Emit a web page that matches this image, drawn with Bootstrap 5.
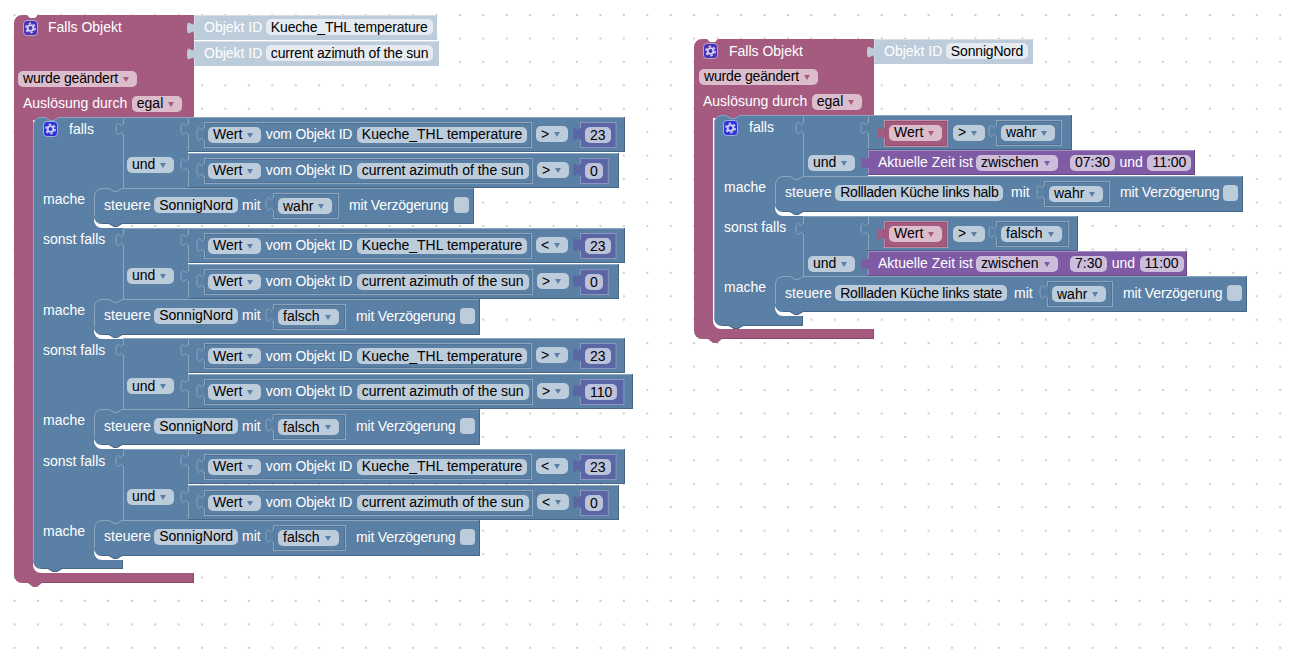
<!DOCTYPE html>
<html lang="de">
<head>
  <meta charset="UTF-8" />
  <meta name="viewport" content="width=device-width, initial-scale=1.0"/>
  <title>Blockly Skript</title>
  <link href="https://cdn.jsdelivr.net/npm/bootstrap@5.3.0/dist/css/bootstrap.min.css" rel="stylesheet">
  <style>
    body { background: #fff; overflow: hidden; }
    .workspace {
      width: 1300px;
      height: 661px;
      font-family: "Liberation Sans", Arial, sans-serif;
      font-size: 14px;
      line-height: 16px;
      /* Blockly grid dots */
      background-image: radial-gradient(circle at center, #c4c4c4 0, #d2d2d2 1px, transparent 1.5px);
      background-size: 23.45px 23.45px;
      background-position: 2.8px 3.3px;
    }
    .field-run { column-gap: 4.5px; white-space: nowrap; height: 16px; }
    .snug { column-gap: 3.5px; }
    .lbl { color: #fff; }
    .tight { letter-spacing: -.17px; }
    .tighter { letter-spacing: -.23px; }
    .chip {
      display: inline-flex;
      align-items: center;
      height: 16px;
      padding: 0 5px;
      border-radius: 5px;
      color: #000;
    }
    .chip.drop::after {
      content: "";
      margin: 0 3px 0 5px;
      border-left: 3px solid transparent;
      border-right: 3px solid transparent;
      border-top: 5px solid var(--arrow);
    }
    /* text sits one pixel higher in some rows of the picture */
    .lift .chip { padding-bottom: 2px; }
    .lift .chip.drop::after { margin-top: 2px; }
    .lift .lbl { margin-top: -2px; }
    .tone-blue { background: #bdccdb; --arrow: #5b80a5; }
    .tone-mag { background: #dbbdcc; --arrow: #a55b80; }
    .tone-pur { background: #ccbddb; --arrow: #805ba5; }
    .tone-num { background: #bdc2db; }
    .tone-shadow { background: #e5ebf1; }
    .tick { display: block; width: 15px; height: 16px; border-radius: 4px; background: #bdccdb; }
  </style>
</head>
<body>
  <main class="workspace position-relative" id="ws"></main>

  <script src="https://cdn.jsdelivr.net/npm/bootstrap@5.3.0/dist/js/bootstrap.bundle.min.js"></script>
  <script>
    const PAL = {
      mag: { f: "#a55b80", l: "#c08ca6", d: "#844966" },
      blue: { f: "#5b80a5", l: "#8ca6c0", d: "#496684" },
      pur: { f: "#805ba5", l: "#a68cc0", d: "#664984" },
      num: { f: "#5b67a5", l: "#8c95c0", d: "#495284" },
      shadow: { f: "#bdccdb", l: "#d7e0e9", d: "#bdccdb" }
    };
    let svg = "";
    let html = "";

    // --- shapes ---
    function box(x1, y1, x2, y2, p) {
      svg += `<rect x="${x1}" y="${y1}" width="${x2 - x1}" height="${y2 - y1}" fill="${p.f}"/>`;
      svg += `<path d="M${x1 + .5} ${y2}V${y1 + .5}H${x2}" fill="none" stroke="${p.l}"/>`;
      svg += `<path d="M${x2 - .5} ${y1}V${y2 - .5}H${x1}" fill="none" stroke="${p.d}"/>`;
    }
    function socket(x1, y1, x2, y2, p) {
      // value block sitting in its input: same colour, framed
      svg += `<rect x="${x1 + .5}" y="${y1 + .5}" width="${x2 - x1 - 1}" height="${y2 - y1 - 1}" fill="${p.f}" stroke="${p.l}"/>`;
      svg += `<path d="M${x1 + 1.5} ${y2 - 1.5}V${y1 + 1.5}H${x2 - 1.5}V${y2 - 1.5}H${x1 + 1.5}" fill="none" stroke="${p.d}" stroke-opacity=".5"/>`;
    }
    function tabPath(x, y, h) {
      const s = h / 12;
      return `M${x} ${y}c0 ${8 * s} -7 ${-6.4 * s} -7 ${6 * s}s7 ${-2 * s} 7 ${6 * s}`;
    }
    function tab(x, y, p, h = 12) {
      svg += `<path d="${tabPath(x, y, h)}" fill="${p.f}" stroke="${p.l}"/>`;
      svg += `<rect x="${x - .5}" y="${y + 1}" width="2" height="${h - 2}" fill="${p.f}"/>`;
    }
    function tabSolid(x, y, p, h = 12) {
      svg += `<path d="${tabPath(x, y, h)}z" fill="${p.f}"/>`;
      svg += `<rect x="${x - .5}" y="${y + 1}" width="2" height="${h - 2}" fill="${p.f}"/>`;
    }
    function statement(x, y1, x2, y2, p) {
      const n = x + 15;
      svg += `<path d="M${x} ${y1 + 8}A8 8 0 0 1 ${x + 8} ${y1}H${n}l5 3 3 0 5 -3H${x2}V${y2}H${n + 13}l-5 3 -3 0 -5 -3H${x + 8}A8 8 0 0 1 ${x} ${y2 - 8}Z" fill="${p.f}"/>`;
      svg += `<path d="M${x + .5} ${y2 - 8}V${y1 + 8}A7.5 7.5 0 0 1 ${x + 8} ${y1 + .5}H${n}l5 3 3 0 5 -3H${x2}" fill="none" stroke="${p.l}"/>`;
      svg += `<path d="M${x2 - .5} ${y1}V${y2 - .5}H${n + 13}l-5 3 -3 0 -5 -3H${x + 8}" fill="none" stroke="${p.d}"/>`;
    }
    function gap(x, x2, y2) {
      // white sliver under a nested statement
      svg += `<path d="M${x} ${y2 - 8}A8 8 0 0 0 ${x + 8} ${y2}H${x2}V${y2 + 4}H${x + 8}A8 8 0 0 1 ${x} ${y2 - 4}Z" fill="#fff"/>`;
    }
    function hat(x, y, xr, yTop, yBar) {
      // magenta C shape of the trigger block
      const p = PAL.mag, xi = x + 19;
      svg += `<path d="M${x} ${y + 8}A8 8 0 0 1 ${x + 8} ${y}H${x + 13}l3 3 5 0 3 -3H${xr}V${yTop + 3}H${xi}V${yBar - 8}A8 8 0 0 0 ${xi + 8} ${yBar}H${xr}V${yBar + 10}H${x + 28}l-5 4 -4 0 -5 -4H${x + 8}A8 8 0 0 1 ${x} ${yBar + 2}Z" fill="${p.f}"/>`;
      svg += `<path d="M${xr - .5} ${yBar}V${yBar + 9.5}H${x + 28}" fill="none" stroke="${p.d}"/>`;
    }
    function ifBlock(x, xr, y, yEnd) {
      const p = PAL.blue;
      svg += `<path d="M${x} ${y + 8}A8 8 0 0 1 ${x + 8} ${y}H${x + 12}l5 3 4 0 5 -3H${xr}V${yEnd}H${x + 29}l-5 3 -4 0 -5 -3H${x + 8}A8 8 0 0 1 ${x} ${yEnd - 8}Z" fill="${p.f}"/>`;
      svg += `<path d="M${x + .5} ${yEnd - 8}V${y + 8}A7.5 7.5 0 0 1 ${x + 8} ${y + .5}H${x + 12}l5 3 4 0 5 -3H${xr}" fill="none" stroke="${p.l}"/>`;
      svg += `<path d="M${xr - .5} ${yEnd - 10}V${yEnd - .5}H${x + 29}l-5 3 -4 0 -5 -3H${x + 8}" fill="none" stroke="${p.d}"/>`;
    }
    function gear(x, y, fill) {
      svg += `<g transform="translate(${x} ${y})"><rect x=".5" y=".5" width="14" height="15" rx="3.5" fill="${fill}" stroke="#d5d5f5" stroke-opacity=".65"/>`;
      svg += `<circle cx="7.5" cy="8" r="2.9" fill="none" stroke="#d2d2f4" stroke-width="1.9"/>`;
      svg += `<circle cx="7.5" cy="8" r="4.7" fill="none" stroke="#d2d2f4" stroke-width="1.5" stroke-dasharray="2.4 2.52"/></g>`;
    }

    // --- fields ---
    const lbl = (t, cls = "") => `<span class="lbl ${cls}">${t}</span>`;
    const chip = (t, tone, cls = "") => `<span class="chip tone-${tone} ${cls}">${t}</span>`;
    const drop = (t, tone, cls = "") => `<span class="chip drop tone-${tone} ${cls}">${t}</span>`;
    const tick = `<span class="tick"></span>`;
    function place(cls, x, y, items) {
      html += `<div class="field-run ${cls} position-absolute d-flex align-items-center" style="left:${x}px;top:${y}px">${items.join("")}</div>`;
    }
    const run = (x, y, ...items) => place("", x, y, items);
    const lifted = (on, x, y, ...items) => place(on ? "lift" : "", x, y, items);

    // --- blocks ---
    function compare(y, xr, name, op, num, up) {
      const x = 188, p = PAL.blue;
      box(x, y, xr, y + 35, p);
      tab(x, y + 6, p);
      const inner = name.startsWith("Kueche") ? 532 : 533;
      socket(204, y + 5, inner, y + 31, p);
      tab(204, y + 10, p, 14);
      const nx = 580, numW = num.length * 7.8 + 21;
      svg += `<rect x="${nx + .5}" y="${y + 5.5}" width="${numW - 1}" height="25" fill="${PAL.num.f}" stroke="${PAL.num.l}"/>`;
      tabSolid(nx, y + 10, PAL.num, 14);
      lifted(up, 208, y + 10, drop("Wert", "blue"), lbl("vom Objekt ID", "tight"), chip(name, "blue"));
      run(inner + 4, y + 9, drop(op, "blue"));
      run(nx + 5, y + 10, chip(num, "num"));
    }
    // socket and "mit" position per name, the chip width in front decides them
    const NAME_POS = {
      "SonnigNord": { box: 179, mit: 148, cls: "" },
      "Rollladen Küche links halb": { box: 269, mit: 236, cls: "tighter" },
      "Rollladen Küche links state": { box: 272, mit: 239, cls: "tighter" }
    };
    function steuere(x, y, xr, name, val, up) {
      const p = PAL.blue, y2 = y + 36, pos = NAME_POS[name];
      gap(x, x + 29, y2);
      statement(x, y, xr, y2, p);
      place("snug" + (up ? " lift" : ""), x + 10, y + 9, [lbl("steuere"), chip(name, "blue", pos.cls)]);
      lifted(up, x + pos.mit, y + 9, lbl("mit"));
      const bx = x + pos.box;
      socket(bx, y + 5, bx + (val === "wahr" ? 66 : 73), y + 31, p);
      tab(bx, y + 9, p, 14);
      lifted(up, bx + 5, y + 10, drop(val, "blue"));
      lifted(up && x > 500, bx + (val === "wahr" ? 76 : 83), y + 9, lbl("mit Verzögerung", "tight"));
      run(xr - 20, y + 9, tick);
    }

    function idBlock(x, y, xr, h, name) {
      box(x, y, xr, y + h, PAL.shadow);
      tabSolid(x, y + 7, PAL.shadow);
      place("snug", x + 10, y + 4, [lbl("Objekt ID"), chip(name, "shadow", "tight")]);
    }

    // left script
    hat(14, 15, 194, 117, 573);
    idBlock(194, 15, 437, 25, "Kueche_THL temperature");
    idBlock(194, 41, 439, 25, "current azimuth of the sun");
    gear(23, 20, "#4a2fb4");
    run(48, 19, lbl("Falls Objekt"));
    lifted(true, 18, 71, drop("wurde geändert", "mag", "tight"));
    lifted(true, 23, 96, lbl("Auslösung durch"), drop("egal", "mag"));
    ifBlock(33, 123, 117, 569);
    gear(43, 121, "#2d33dc");
    run(69, 121, lbl("falls"));

    const sections = [
      { top: 117, label: null, w: [625, 619], ops: ["&gt;", "&gt;"], nums: ["23", "0"], val: "wahr", xr: 474, ly: 3, up: [1, 1, 1, 0] },
      { top: 228, label: "sonst falls", w: [625, 619], ops: ["&lt;", "&gt;"], nums: ["23", "0"], val: "falsch", xr: 480, ly: 3, up: [1, 1, 1, 1] },
      { top: 338, label: "sonst falls", w: [625, 633], ops: ["&gt;", "&gt;"], nums: ["23", "110"], val: "falsch", xr: 480, ly: 4, up: [0, 1, 0, 0] },
      { top: 449, label: "sonst falls", w: [625, 619], ops: ["&lt;", "&lt;"], nums: ["23", "0"], val: "falsch", xr: 480, ly: 4, up: [1, 1, 1, 1] }
    ];
    sections.forEach(s => {
      const t = s.top;
      if (s.label) run(43, t + s.ly, lbl(s.label));
      svg += `<rect x="123" y="${t}" width="65" height="71" fill="${PAL.blue.f}"/><path d="M123.5 ${t + 71}V${t + .5}H188" fill="none" stroke="${PAL.blue.l}"/>`;
      tab(123, t + 6, PAL.blue);
      compare(t, s.w[0], "Kueche_THL temperature", s.ops[0], s.nums[0], s.up[0]);
      compare(t + 36, s.w[1], "current azimuth of the sun", s.ops[1], s.nums[1], s.up[1]);
      lifted(s.up[2], 127, t + 40, drop("und", "blue"));
      run(43, t + 74, lbl("mache"));
      steuere(94, t + 71, s.xr, "SonnigNord", s.val, s.up[3]);
    });

    // right script
    hat(694, 39, 874, 115, 329);
    idBlock(874, 39, 1033, 25, "SonnigNord");
    gear(703, 43, "#4a2fb4");
    run(729, 43, lbl("Falls Objekt"));
    lifted(true, 699, 69, drop("wurde geändert", "mag", "tight"));
    lifted(true, 703, 94, lbl("Auslösung durch"), drop("egal", "mag"));
    ifBlock(714, 803, 115, 326);
    gear(723, 120, "#2d33dc");
    run(749, 119, lbl("falls"));

    function timeRow(top, xrBlue, val, vw, xrPur, t1) {
      svg += `<rect x="803" y="${top}" width="65" height="61" fill="${PAL.blue.f}"/><path d="M803.5 ${top + 61}V${top + .5}H868" fill="none" stroke="${PAL.blue.l}"/>`;
      tab(803, top + 7, PAL.blue);
      box(868, top, xrBlue, top + 35, PAL.blue);
      tab(868, top + 7, PAL.blue);
      socket(884, top + 5, 948, top + 32, PAL.mag);
      tabSolid(884, top + 12, PAL.mag);
      lifted(true, 889, top + 10, drop("Wert", "mag"));
      lifted(true, 953, top + 10, drop("&gt;", "blue"));
      socket(996, top + 5, 996 + vw, top + 31, PAL.blue);
      tab(996, top + 10, PAL.blue);
      lifted(true, 1001, top + 10, drop(val, "blue"));
      box(868, top + 35, xrPur, top + 60, PAL.pur);
      tabSolid(868, top + 42, PAL.pur);
      lifted(true, 878, top + 40, lbl("Aktuelle Zeit ist"));
      lifted(true, 976, top + 40, drop("zwischen", "pur"));
      lifted(true, 1070, top + 40, chip(t1, "pur"), lbl("und"), chip("11:00", "pur"));
      lifted(true, 808, top + 40, drop("und", "blue"));
    }
    timeRow(115, 1072, "wahr", 66, 1195, "07:30");
    run(724, 179, lbl("mache"));
    steuere(775, 176, 1243, "Rollladen Küche links halb", "wahr", true);
    run(724, 219, lbl("sonst falls"));
    timeRow(216, 1078, "falsch", 73, 1187, "7:30");
    run(724, 279, lbl("mache"));
    steuere(775, 276, 1247, "Rollladen Küche links state", "wahr", false);

    const ws = document.getElementById("ws");
    ws.innerHTML = `<svg class="position-absolute top-0 start-0" width="1300" height="661" aria-hidden="true">${svg}</svg>${html}`;
  </script>
</body>
</html>
